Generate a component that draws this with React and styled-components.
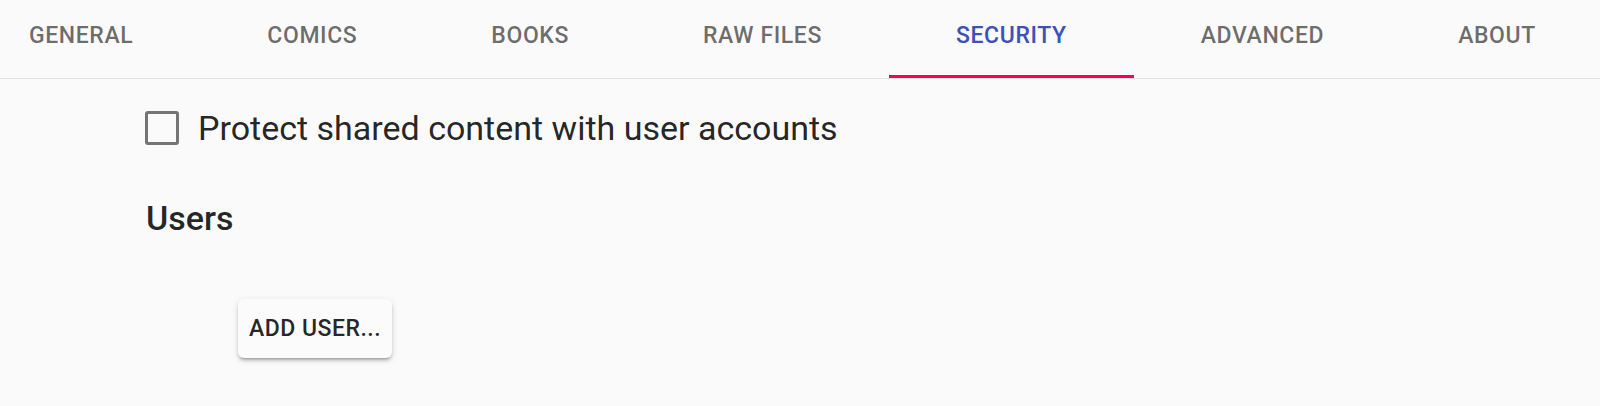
import React, { useState } from 'react'
import styled, { createGlobalStyle } from 'styled-components';

const GlobalStyle = createGlobalStyle`
    html, body {
        margin: 0;
        padding: 0;
        background: #fafafa;
        font-family: Roboto, "Noto Sans", sans-serif;
        color: rgba(0, 0, 0, 0.87);
    }
`;

const Page = styled.div`
    width: 1600px;
    min-height: 406px;
    background: #fafafa;
`;

const Header = styled.div`
    height: 78px;
    border-bottom: 1px solid #e0e0e0;
    overflow: hidden;
`;

// the strip is scrolled a little to the left, as a scrollable tab bar would be
const TabList = styled.div`
    display: flex;
    height: 78px;
    margin-left: -38px;
`;

const Tab = styled.div`
    position: relative;
    box-sizing: border-box;
    flex: 0 0 auto;
    height: 78px;
    padding: 24px 67px 0;
    font-weight: 500;
    font-size: 23px;
    line-height: 23px;
    letter-spacing: 0.6px;
    text-transform: uppercase;
    white-space: nowrap;
    cursor: pointer;
    user-select: none;
    color: ${props => props.$active ? '#3f51b5' : 'rgba(0, 0, 0, 0.58)'};
`;

const Indicator = styled.span`
    position: absolute;
    left: 0;
    right: 0;
    bottom: 0;
    height: 3px;
    background: #f50057;
`;

const Content = styled.div`
    padding: 29px 0 0 145px;
`;

const CheckRow = styled.label`
    display: flex;
    align-items: center;
    gap: 19px;
    font-size: 34px;
    line-height: 40px;
    cursor: pointer;
`;

const Box = styled.span`
    box-sizing: border-box;
    width: 34px;
    height: 34px;
    border: 3px solid #757575;
    border-radius: 3px;
    background: ${props => props.$checked ? '#757575' : 'transparent'};
`;

const Heading = styled.h2`
    margin: 50px 0 0 1px;
    font-size: 34px;
    line-height: 40px;
    font-weight: 500;
`;

const Button = styled.button`
    margin: 61px 0 0 93px;
    height: 59px;
    padding: 0 11px;
    border: none;
    border-radius: 6px;
    background: #fbfbfb;
    font-family: Roboto, sans-serif;
    font-weight: 500;
    font-size: 23px;
    line-height: 23px;
    letter-spacing: 0.5px;
    color: rgba(0, 0, 0, 0.87);
    box-shadow: 0 4px 2px -3px rgba(0, 0, 0, 0.2), 0 3px 3px 0 rgba(0, 0, 0, 0.14), 0 2px 7px 0 rgba(0, 0, 0, 0.12);
    cursor: pointer;
`;

const tabs = ['General', 'Comics', 'Books', 'Raw files', 'Security', 'Advanced', 'About'];

const App = () => {
  const [active, setActive] = useState(4);
  const [checked, setChecked] = useState(false);

  return (
    <Page>
        <GlobalStyle />
        <Header>
            <TabList role="tablist">
                {tabs.map((t, i) => (
                    <Tab key={t} role="tab" $active={i === active} onClick={() => setActive(i)}>
                        {t}
                        {i === active && <Indicator />}
                    </Tab>
                ))}
            </TabList>
        </Header>
        <Content>
            <CheckRow onClick={() => setChecked(!checked)}>
                <Box $checked={checked} />
                Protect shared content with user accounts
            </CheckRow>
            <Heading>Users</Heading>
            <Button>ADD USER...</Button>
        </Content>
    </Page>
  )
}

export default App;
